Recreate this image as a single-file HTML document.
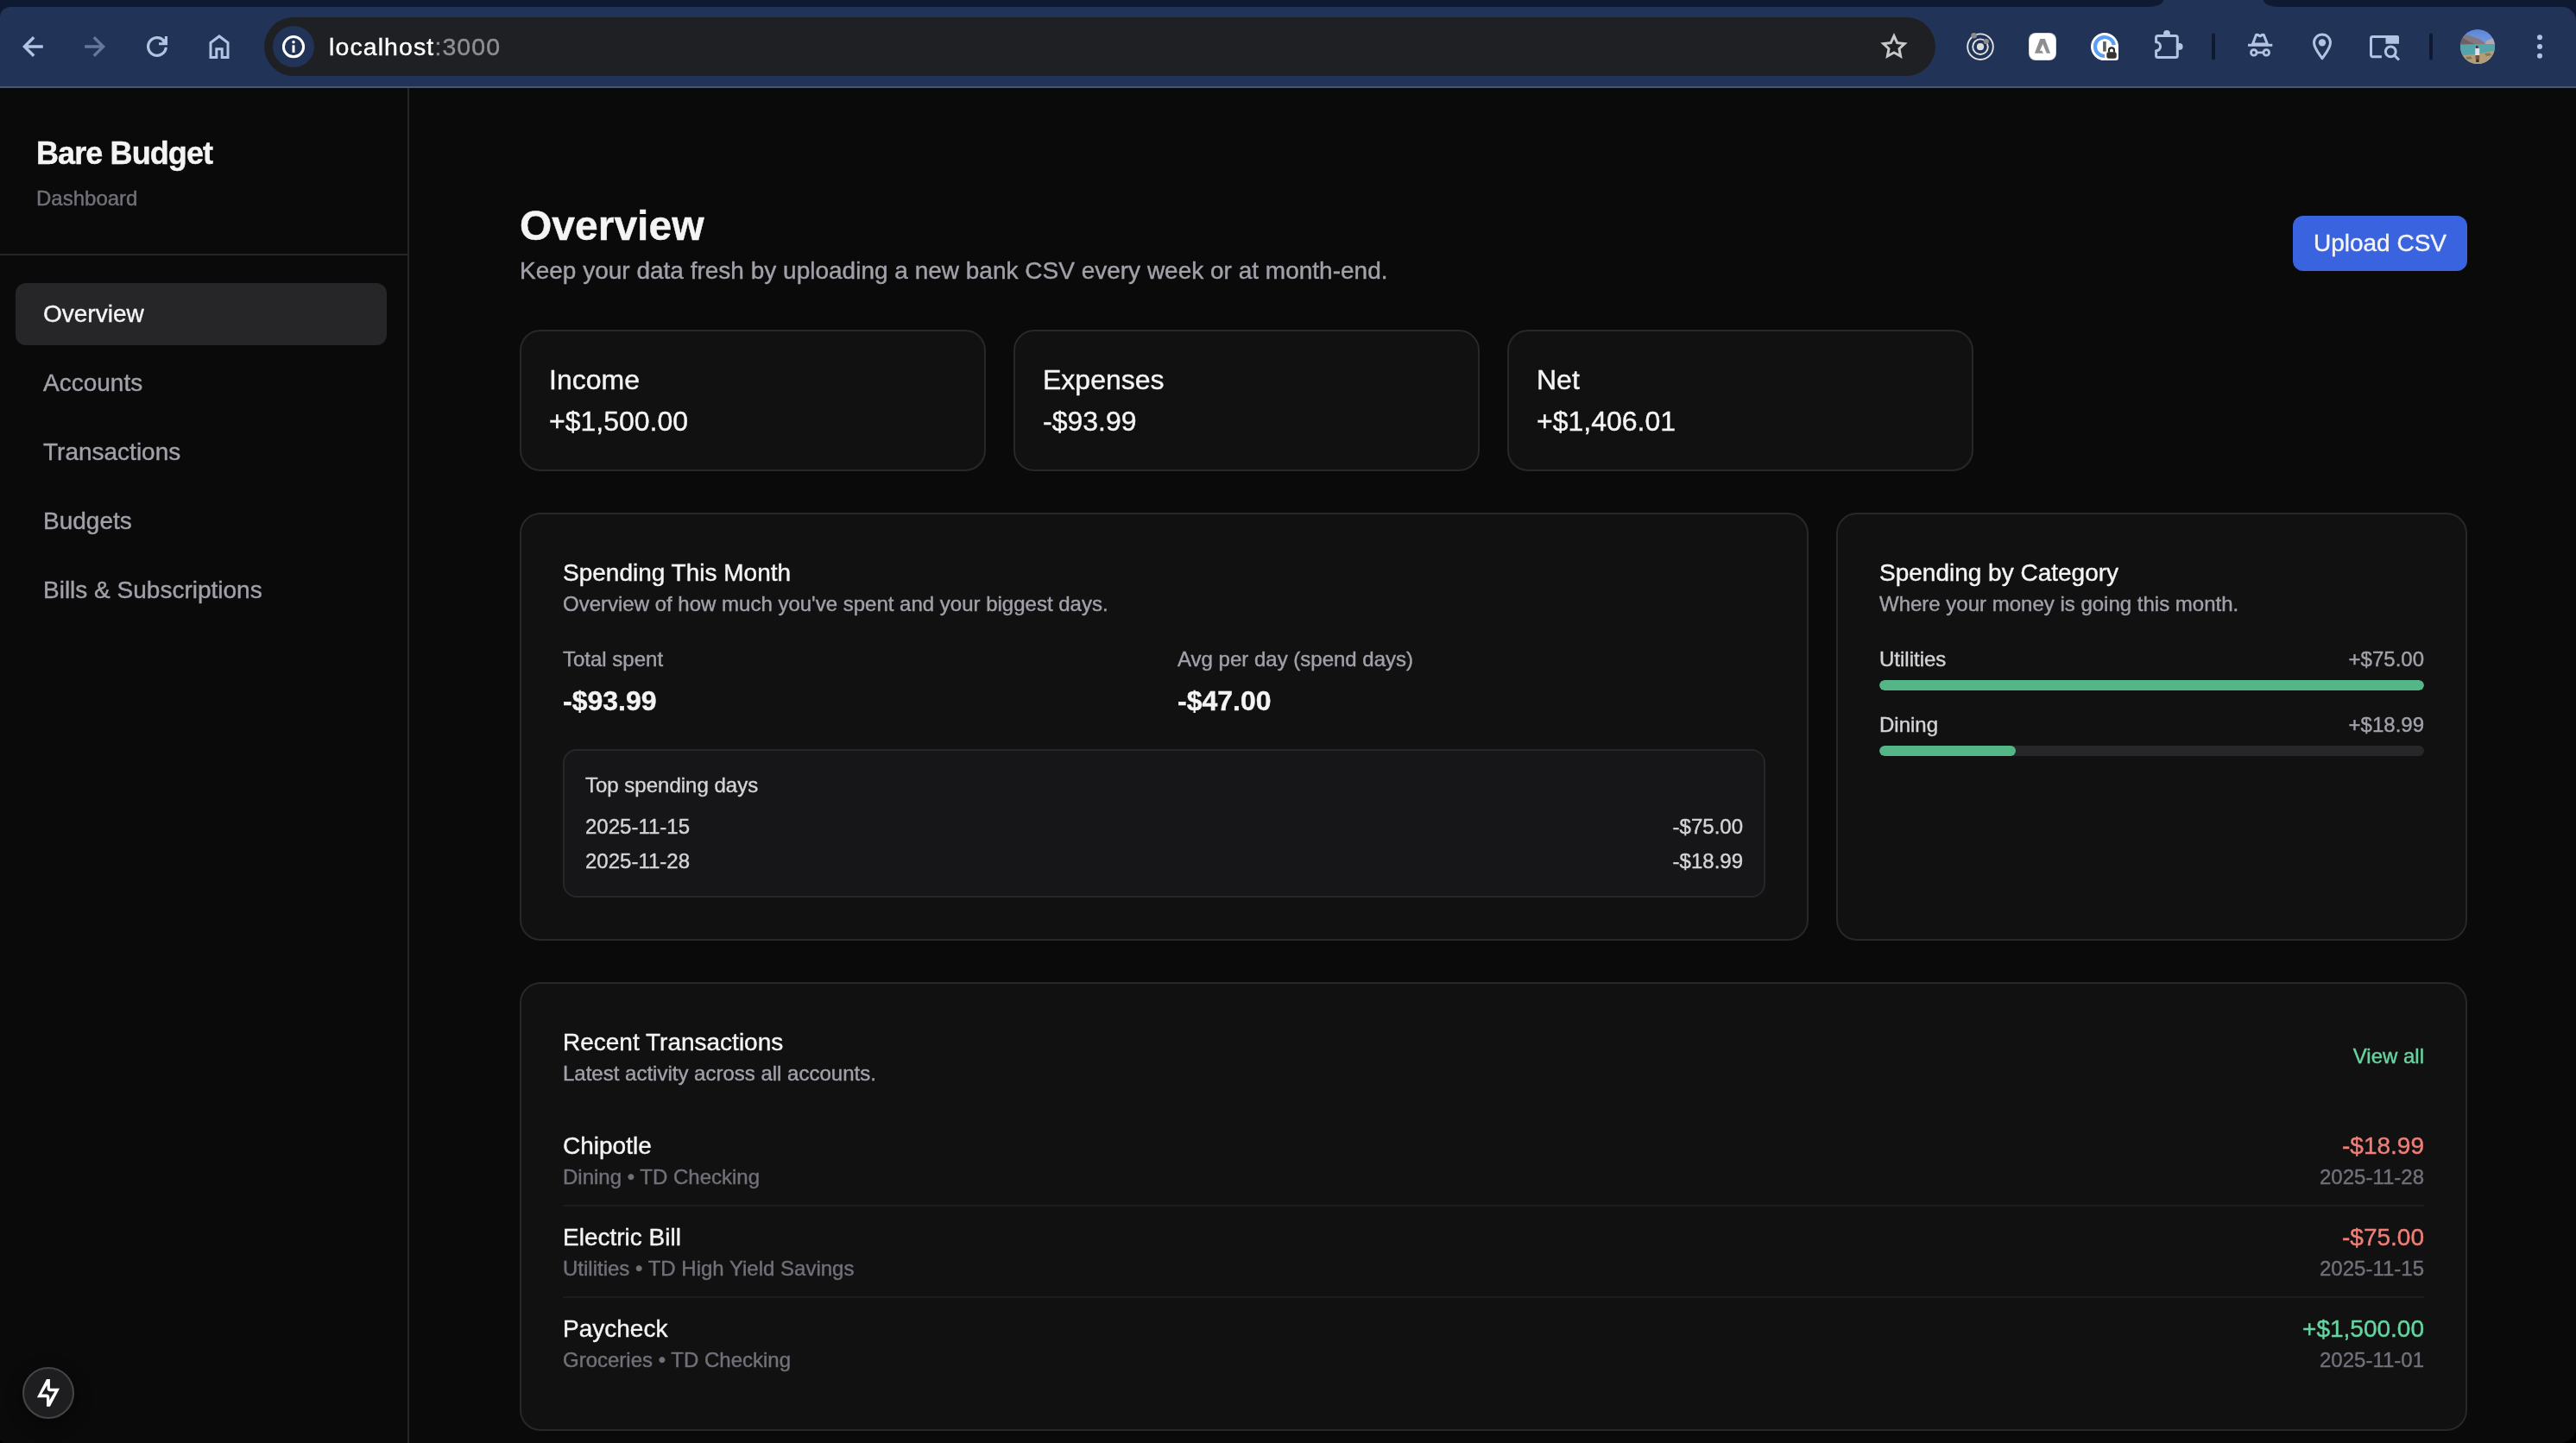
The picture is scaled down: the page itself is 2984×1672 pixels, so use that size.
<!DOCTYPE html>
<html>
<head>
<meta charset="utf-8">
<style>
*{box-sizing:border-box;margin:0;padding:0}
html,body{width:2984px;height:1672px;overflow:hidden;background:#0a0a0a;font-family:"Liberation Sans",sans-serif;color:#fafafa}
.abs{position:absolute}
/* browser chrome */
#tabstrip{left:0;top:0;width:2984px;height:8px;background:#213457}
#toolbar{left:0;top:8px;width:2984px;height:92px;background:#213457;border-radius:12px 16px 0 0}
#tbborder{left:0;top:100px;width:2984px;height:2px;background:#44577b}
#urlbar{left:306px;top:20px;width:1936px;height:68px;background:#1f2023;border-radius:34px}
#infobg{left:316px;top:30px;width:48px;height:48px;border-radius:24px;background:#213457}
#urltext{left:381px;top:20px;height:68px;line-height:68px;font-size:28.5px;letter-spacing:1.1px;color:#fff;white-space:nowrap}
#urltext span{color:#8f9092}
/* sidebar */
#sidebar{left:0;top:102px;width:474px;height:1570px;border-right:2px solid #262626;background:#0a0a0a}
#brand{left:42px;top:150px;font-size:36px;line-height:56px;font-weight:bold;letter-spacing:-0.9px;color:#f4f4f5;white-space:nowrap}
#brandsub{left:42px;top:214px;font-size:24px;line-height:32px;color:#71717a}
#sbdiv{left:0;top:294px;width:472px;height:2px;background:#262626}
.nav{position:absolute;left:18px;width:430px;height:72px;border-radius:12px;padding-left:32px;font-size:28px;line-height:72px;color:#a1a1aa;white-space:nowrap}
.nav.active{background:#262628;color:#f4f4f5}
#devbtn{left:26px;top:1584px;width:60px;height:60px;border-radius:30px;background:#1e1e20;border:2px solid #454547;box-shadow:0 6px 18px 2px rgba(0,0,0,0.35)}
/* main */
#title{left:602px;top:230px;font-size:48px;line-height:64px;font-weight:bold;color:#f4f4f5;white-space:nowrap}
#subtitle{left:602px;top:294px;font-size:28px;line-height:40px;color:#a1a1aa;white-space:nowrap}
#upload{left:2656px;top:250px;width:202px;height:64px;border-radius:12px;background:#3a63e0;color:#f4f4f5;font-size:28px;line-height:64px;text-align:center;white-space:nowrap}
.card{position:absolute;background:#111111;border:2px solid #28282b;border-radius:24px}
.stat{top:382px;width:540px;height:164px;padding:32px}
.stat .l,.stat .v{font-size:32px;line-height:48px;color:#f4f4f5;white-space:nowrap}
.ct{font-size:28px;line-height:40px;color:#f4f4f5;white-space:nowrap}
.cs{font-size:24px;line-height:32px;color:#a1a1aa;white-space:nowrap}

.big{font-size:32px;line-height:48px;font-weight:bold;color:#f4f4f5;margin-top:8px;white-space:nowrap}
#topdays{margin-top:32px;height:172px;border:2px solid #27272a;border-radius:16px;background:#161618;padding:24px}
.tdt{font-size:24px;line-height:32px;color:#d4d4d8}
.tdr{display:flex;justify-content:space-between;font-size:24px;line-height:32px;color:#d4d4d8}
.catrow{display:flex;justify-content:space-between;font-size:24px;line-height:32px}
.cn{color:#d4d4d8}.ca{color:#a1a1aa}
.bar{margin-top:8px;height:12px;border-radius:6px;background:#27272a;overflow:hidden}
.fill{height:12px;border-radius:6px;background:#54b587}
.viewall{font-size:24px;line-height:32px;color:#66d4a0}
.tx{display:flex;justify-content:space-between;padding:16px 0;border-bottom:2px solid #1c1c1f}
.tx.last{border-bottom:none}
.txn{font-size:28px;line-height:40px;color:#f4f4f5}
.txa{font-size:28px;line-height:40px}
.txm{font-size:24px;line-height:32px;color:#71717a;white-space:nowrap}
.neg{color:#ef7f78}.pos{color:#66d4a0}
.card,.nav,#brand,#brandsub,#title,#subtitle,#upload,#urltext{will-change:transform}body *{-webkit-text-stroke-width:0.4px}</style>
</head>
<body>
<!-- browser chrome -->
<div id="tabstrip" class="abs"></div>
<div class="abs" style="left:0;top:0;width:30px;height:30px;background:#0d1a31"></div>
<div class="abs" style="left:2954px;top:0;width:30px;height:30px;background:#0d1a31"></div>
<div class="abs" style="left:0;top:0;width:2506px;height:8px;background:#0d1a31;border-bottom-right-radius:18px 8px"></div>
<div class="abs" style="left:2622px;top:0;width:362px;height:8px;background:#0d1a31;border-bottom-left-radius:18px 8px"></div>
<div id="toolbar" class="abs"></div>
<div id="tbborder" class="abs"></div>
<div id="urlbar" class="abs"></div>
<div id="infobg" class="abs"></div>
<div id="urltext" class="abs">localhost<span>:3000</span></div>
<svg class="abs" style="left:0;top:0" width="2984" height="102" viewBox="0 0 2984 102">
  <g fill="none" stroke="#b3c3e2" stroke-width="3.4">
    <path d="M49.8 54H29 M39.2 43.2L28.4 54L39.2 64.8" stroke-linejoin="miter"/>
  </g>
  <g fill="none" stroke="#66789a" stroke-width="3.4">
    <path d="M98.2 54H119 M108.8 43.2L119.6 54L108.8 64.8"/>
  </g>
  <path d="M192.27 54.86A10.35 10.35 0 1 1 189.89 47.31" fill="none" stroke="#b3c3e2" stroke-width="3.2"/>
  <path d="M190.9 42H194V52.2H184V49.2H188.6L187.2 47.6L190.9 45Z" fill="#b3c3e2"/>
  <path d="M244 66.5V49.6L254 42L264 49.6V66.5H257.2V56.8H250.8V66.5Z" fill="none" stroke="#b3c3e2" stroke-width="3"/>
  <!-- info icon -->
  <circle cx="340" cy="54.2" r="11.6" fill="none" stroke="#fff" stroke-width="3"/>
  <circle cx="340" cy="48.7" r="1.8" fill="#fff"/>
  <rect x="338.5" y="52.3" width="3" height="8.6" fill="#fff"/>
  <!-- star -->
  <path d="M2194.00 38.10L2198.70 48.13L2209.69 49.50L2201.61 57.07L2203.70 67.95L2194.00 62.60L2184.30 67.95L2186.39 57.07L2178.31 49.50L2189.30 48.13Z M2194.00 45.20L2196.69 50.90L2202.94 51.70L2198.35 56.01L2199.53 62.20L2194.00 59.17L2188.47 62.20L2189.65 56.01L2185.06 51.70L2191.31 50.90Z" fill="#c8c8c8" fill-rule="evenodd"/>
  <!-- orbit ext -->
  <circle cx="2294" cy="54.2" r="14.8" fill="none" stroke="#e3e3e3" stroke-width="1.9"/>
  <circle cx="2294" cy="54.2" r="8.8" fill="none" stroke="#e3e3e3" stroke-width="1.9"/>
  <circle cx="2294" cy="54.2" r="4.1" fill="#dcdcdc"/>
  <circle cx="2286.6" cy="41.3" r="3.3" fill="#8c8c8c"/>
  <circle cx="2300.8" cy="48" r="3.1" fill="#8c8c8c"/>
  <!-- A ext -->
  <rect x="2350" y="38" width="32" height="32" rx="8" fill="#d0d0d0"/>
  <rect x="2350.8" y="38.8" width="30.4" height="30.4" rx="7.4" fill="#fff"/>
  <path d="M2363.3 44.9H2368.85L2375.05 61.7H2370.8L2366.4 51.1L2362.9 58.8H2365.5L2366.85 61.7H2356.9Z" fill="#8f8f8f"/>
  <!-- 1password -->
  <circle cx="2438" cy="54.1" r="16" fill="#fff"/>
  <rect x="2438" y="54" width="16" height="16" rx="3" fill="#fff"/>
  <path d="M2438 65A11 11 0 1 1 2448.83 52.09" fill="none" stroke="#5b9ef5" stroke-width="4.2"/>
  <rect x="2439.5" y="53.5" width="13.8" height="15.5" rx="4" fill="#fff"/>
  <rect x="2436.1" y="48.1" width="3.6" height="11.5" fill="#5c5c5c"/>
  <path d="M2443 60.5V58.3A3 3 0 0 1 2449 58.3V60.5" fill="none" stroke="#2a2a2a" stroke-width="2.2"/>
  <rect x="2440.3" y="60.2" width="11.4" height="7.6" rx="2.4" fill="#333"/>
  <!-- puzzle -->
  <path d="M2497.6 48.8V43.5A2 2 0 0 1 2499.6 41.5H2520.3A2 2 0 0 1 2522.3 43.5V64.5A2 2 0 0 1 2520.3 66.5H2499.6A2 2 0 0 1 2497.6 64.5V58.8A5 5 0 0 0 2497.6 48.8Z" fill="none" stroke="#b3c3e2" stroke-width="3" stroke-linejoin="round"/>
  <circle cx="2510" cy="39.0" r="3.9" fill="#b3c3e2"/>
  <circle cx="2524.7" cy="53.9" r="3.9" fill="#b3c3e2"/>
  <!-- separators -->
  <rect x="2562" y="38.5" width="4" height="31" rx="2" fill="#0f1a30"/>
  <rect x="2814" y="38.5" width="4" height="31" rx="2" fill="#0f1a30"/>
  <!-- incognito -->
  <path d="M2609.5 51L2613.5 40.5C2616 39.5 2617 41.8 2618 41.8C2619 41.8 2620 39.5 2622.3 40.5L2626.5 51Z" fill="none" stroke="#b3c3e2" stroke-width="3" stroke-linejoin="round"/>
  <rect x="2604" y="50.8" width="28.3" height="3" fill="#b3c3e2"/>
  <circle cx="2610.8" cy="60.9" r="3.3" fill="none" stroke="#b3c3e2" stroke-width="2.8"/>
  <circle cx="2625.3" cy="60.9" r="3.3" fill="none" stroke="#b3c3e2" stroke-width="2.8"/>
  <path d="M2614 60.9H2622" stroke="#b3c3e2" stroke-width="2.6"/>
  <!-- pin -->
  <path d="M2690 67.8C2688 64.5 2680.5 56 2680.5 49.5A9.5 9.5 0 0 1 2699.5 49.5C2699.5 56 2692 64.5 2690 67.8Z" fill="none" stroke="#b3c3e2" stroke-width="3" stroke-linejoin="round"/>
  <circle cx="2690" cy="49.4" r="4.2" fill="#b3c3e2"/>
  <!-- tab search -->
  <path d="M2758.9 65.8H2748.5A2 2 0 0 1 2746.5 63.8V44.4A2 2 0 0 1 2748.5 42.4H2765" fill="none" stroke="#b3c3e2" stroke-width="3"/>
  <path d="M2763.5 41H2777A2 2 0 0 1 2779 43V50.8H2763.5Z" fill="#b3c3e2"/>
  <circle cx="2769.3" cy="59.8" r="5.9" fill="none" stroke="#b3c3e2" stroke-width="3"/>
  <path d="M2773.6 64.1L2779 69.5" stroke="#b3c3e2" stroke-width="3"/>
  <!-- avatar -->
  <defs><clipPath id="av"><circle cx="2870" cy="54" r="20"/></clipPath></defs>
  <g clip-path="url(#av)">
    <defs><linearGradient id="sky" x1="0" y1="0" x2="0" y2="1"><stop offset="0" stop-color="#5a85d8"/><stop offset="1" stop-color="#9dbde8"/></linearGradient></defs>
    <rect x="2850" y="34" width="40" height="40" fill="url(#sky)"/>
    <path d="M2850 44L2855 40L2860 41L2866 43L2873 45.5L2879 50L2884 46L2890 44V52H2850Z" fill="#857780"/>
    <path d="M2850 45L2853 44L2858 47L2864 50L2870 52H2850Z" fill="#6e5f62"/>
    <path d="M2880 48L2884 45.5L2889 44L2891 45V52H2878Z" fill="#b3a8b0"/>
    <path d="M2850 51.5L2870 51L2890 51V59L2870 63L2850 64.5Z" fill="#55a4ab"/>
    <path d="M2850 64.5L2870 63L2890 58.5V74H2850Z" fill="#b49c77"/>
    <path d="M2856 66L2862 65.5L2864 68L2858 69Z M2878 62L2884 61.5L2886 64L2880 65Z" fill="#7d7a58"/>
    <rect x="2868" y="53" width="2.6" height="3" fill="#4a3a30"/>
    <rect x="2867.2" y="56" width="5" height="8" fill="#e6dde6"/>
    <rect x="2867.6" y="64" width="4.6" height="4.5" fill="#6a5840"/>
    <rect x="2868.2" y="68.5" width="3.4" height="3.5" fill="#3a3028"/>
  </g>
  <!-- menu dots -->
  <circle cx="2942" cy="43.2" r="3" fill="#b3c3e2"/>
  <circle cx="2942" cy="54" r="3" fill="#b3c3e2"/>
  <circle cx="2942" cy="64.8" r="3" fill="#b3c3e2"/>
</svg>

<!-- sidebar -->
<div id="sidebar" class="abs"></div>
<div id="brand" class="abs">Bare Budget</div>
<div id="brandsub" class="abs">Dashboard</div>
<div id="sbdiv" class="abs"></div>
<div class="nav active" style="top:328px">Overview</div>
<div class="nav" style="top:408px">Accounts</div>
<div class="nav" style="top:488px">Transactions</div>
<div class="nav" style="top:568px">Budgets</div>
<div class="nav" style="top:648px">Bills &amp; Subscriptions</div>
<div id="devbtn" class="abs"></div>
<svg class="abs" style="left:0;top:1560px" width="120" height="112" viewBox="0 1560 120 112">
  <path fill="#fff" fill-rule="evenodd" d="M54 1597.9H57.9V1608.7H69L57.9 1629.8H54V1619.2H42.9Z M54.6 1605.1L48.2 1615.6H54.5Q57.3 1616.2 57.3 1619V1622.5L63.4 1612.3H57.3Q54.6 1611.6 54.6 1608.5Z"/>
</svg>

<!-- main -->
<div id="title" class="abs">Overview</div>
<div id="subtitle" class="abs">Keep your data fresh by uploading a new bank CSV every week or at month-end.</div>
<div id="upload" class="abs">Upload CSV</div>

<div class="card stat" style="left:602px"><div class="l">Income</div><div class="v">+$1,500.00</div></div>
<div class="card stat" style="left:1174px"><div class="l">Expenses</div><div class="v">-$93.99</div></div>
<div class="card stat" style="left:1746px"><div class="l">Net</div><div class="v">+$1,406.01</div></div>


<!-- spending this month -->
<div class="card" id="spend" style="left:602px;top:594px;width:1493px;height:496px;padding:48px">
  <div class="ct">Spending This Month</div>
  <div class="cs">Overview of how much you've spent and your biggest days.</div>
  <div style="display:flex;gap:32px;margin-top:32px">
    <div style="width:680px"><div class="cs">Total spent</div><div class="big">-$93.99</div></div>
    <div style="width:680px"><div class="cs">Avg per day (spend days)</div><div class="big">-$47.00</div></div>
  </div>
  <div id="topdays">
    <div class="tdt">Top spending days</div>
    <div class="tdr" style="margin-top:16px"><span>2025-11-15</span><span>-$75.00</span></div>
    <div class="tdr" style="margin-top:8px"><span>2025-11-28</span><span>-$18.99</span></div>
  </div>
</div>

<!-- spending by category -->
<div class="card" id="cat" style="left:2127px;top:594px;width:731px;height:496px;padding:48px">
  <div class="ct">Spending by Category</div>
  <div class="cs">Where your money is going this month.</div>
  <div style="margin-top:32px">
    <div class="catrow"><span class="cn">Utilities</span><span class="ca">+$75.00</span></div>
    <div class="bar"><div class="fill" style="width:100%"></div></div>
    <div class="catrow" style="margin-top:24px"><span class="cn">Dining</span><span class="ca">+$18.99</span></div>
    <div class="bar"><div class="fill" style="width:25%"></div></div>
  </div>
</div>

<!-- recent transactions -->
<div class="card" id="recent" style="left:602px;top:1138px;width:2256px;height:520px;padding:48px">
  <div style="display:flex;justify-content:space-between;align-items:center">
    <div><div class="ct">Recent Transactions</div><div class="cs">Latest activity across all accounts.</div></div>
    <div class="viewall">View all</div>
  </div>
  <div style="margin-top:32px">
    <div class="tx"><div><div class="txn">Chipotle</div><div class="txm">Dining &bull; TD Checking</div></div><div style="text-align:right"><div class="txa neg">-$18.99</div><div class="txm">2025-11-28</div></div></div>
    <div class="tx"><div><div class="txn">Electric Bill</div><div class="txm">Utilities &bull; TD High Yield Savings</div></div><div style="text-align:right"><div class="txa neg">-$75.00</div><div class="txm">2025-11-15</div></div></div>
    <div class="tx last"><div><div class="txn">Paycheck</div><div class="txm">Groceries &bull; TD Checking</div></div><div style="text-align:right"><div class="txa pos">+$1,500.00</div><div class="txm">2025-11-01</div></div></div>
  </div>
</div>
<div class="abs" style="left:0;top:0;width:2984px;height:1672px;border-radius:0 0 18px 6px;box-shadow:0 0 0 40px #000;pointer-events:none"></div>
</body>
</html>
